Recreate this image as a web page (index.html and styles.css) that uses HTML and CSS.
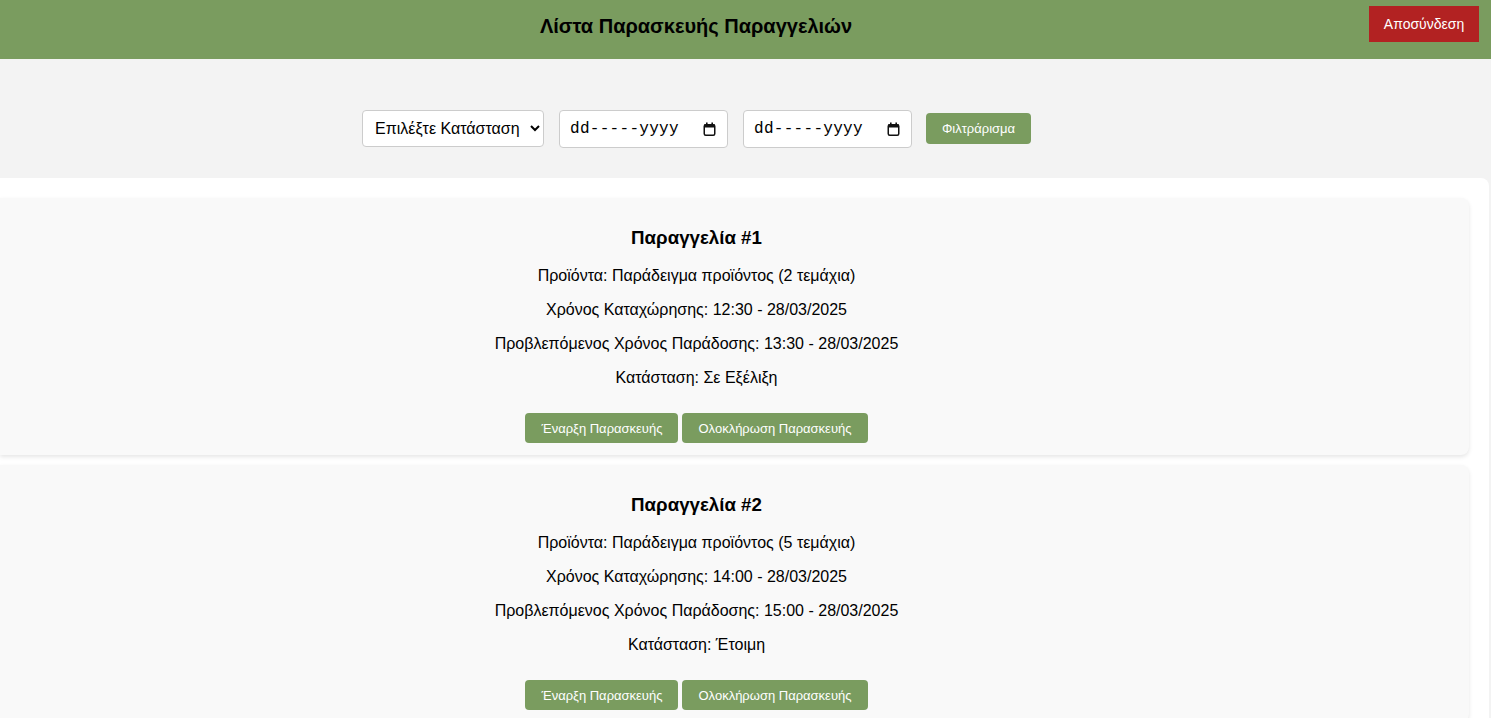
FILE: index.html
```html
<!DOCTYPE html>
<html lang="el">
<head>
<meta charset="utf-8">
<title>Λίστα Παρασκευής Παραγγελιών</title>
<link rel="stylesheet" href="styles.css">
</head>
<body>
<header class="topbar">
  <h1 class="topbar-title">Λίστα Παρασκευής Παραγγελιών</h1>
  <button class="logout-btn" type="button">Αποσύνδεση</button>
</header>

<section class="filters">
  <select class="status-select">
    <option>Επιλέξτε Κατάσταση</option>
    <option>Σε Εξέλιξη</option>
    <option>Έτοιμη</option>
  </select>
  <label class="date-field">
    <input class="date-text" type="text" value="dd-----yyyy" readonly>
    <svg class="cal-icon" width="13" height="14" viewBox="0 0 13 14" aria-hidden="true">
      <rect x="1.25" y="2.75" width="10.5" height="10.5" rx="1.5" fill="none" stroke="#111" stroke-width="1.5"/>
      <rect x="1" y="2.5" width="11" height="3" fill="#111"/>
      <rect x="3" y="0.5" width="1.6" height="2.5" fill="#111"/>
      <rect x="8.4" y="0.5" width="1.6" height="2.5" fill="#111"/>
    </svg>
  </label>
  <label class="date-field">
    <input class="date-text" type="text" value="dd-----yyyy" readonly>
    <svg class="cal-icon" width="13" height="14" viewBox="0 0 13 14" aria-hidden="true">
      <rect x="1.25" y="2.75" width="10.5" height="10.5" rx="1.5" fill="none" stroke="#111" stroke-width="1.5"/>
      <rect x="1" y="2.5" width="11" height="3" fill="#111"/>
      <rect x="3" y="0.5" width="1.6" height="2.5" fill="#111"/>
      <rect x="8.4" y="0.5" width="1.6" height="2.5" fill="#111"/>
    </svg>
  </label>
  <button class="green-btn filter-btn" type="button">Φιλτράρισμα</button>
</section>

<main class="orders">
  <article class="order-card">
    <h3 class="order-title">Παραγγελία #1</h3>
    <p class="order-line">Προϊόντα: Παράδειγμα προϊόντος (2 τεμάχια)</p>
    <p class="order-line">Χρόνος Καταχώρησης: 12:30 - 28/03/2025</p>
    <p class="order-line">Προβλεπόμενος Χρόνος Παράδοσης: 13:30 - 28/03/2025</p>
    <p class="order-line">Κατάσταση: Σε Εξέλιξη</p>
    <div class="order-actions">
      <button class="green-btn" type="button">Έναρξη Παρασκευής</button>
      <button class="green-btn" type="button">Ολοκλήρωση Παρασκευής</button>
    </div>
  </article>
  <article class="order-card">
    <h3 class="order-title">Παραγγελία #2</h3>
    <p class="order-line">Προϊόντα: Παράδειγμα προϊόντος (5 τεμάχια)</p>
    <p class="order-line">Χρόνος Καταχώρησης: 14:00 - 28/03/2025</p>
    <p class="order-line">Προβλεπόμενος Χρόνος Παράδοσης: 15:00 - 28/03/2025</p>
    <p class="order-line">Κατάσταση: Έτοιμη</p>
    <div class="order-actions">
      <button class="green-btn" type="button">Έναρξη Παρασκευής</button>
      <button class="green-btn" type="button">Ολοκλήρωση Παρασκευής</button>
    </div>
  </article>
</main>
</body>
</html>
```

FILE: styles.css
```css
* {
  box-sizing: border-box;
}

body {
  margin: 0;
  background: #f3f3f3;
  font-family: "Liberation Sans", Arial, sans-serif;
  color: #000;
}

.topbar {
  display: flex;
  align-items: flex-start;
  height: 59px;
  padding: 0 12px 0 23px;
  background: #7a9c5f;
}

.topbar-title {
  flex: 1;
  margin: 0;
  padding-top: 15px;
  font-size: 20px;
  line-height: 23px;
  font-weight: bold;
  text-align: center;
  color: #000;
}

.logout-btn {
  margin-top: 6px;
  height: 36px;
  width: 110px;
  padding: 0;
  border: none;
  background: #b22222;
  color: #fff;
  font-family: "Liberation Sans", Arial, sans-serif;
  font-size: 14px;
  cursor: pointer;
}

.filters {
  display: flex;
  justify-content: center;
  align-items: center;
  gap: 15px;
  height: 119px;
  padding: 50px 98px 31px 0;
}

.status-select {
  width: 182px;
  height: 37px;
  padding: 0 6px 0 8px;
  border: 1px solid #ccc;
  border-radius: 4px;
  background: #fff;
  color: #000;
  font-family: "Liberation Sans", Arial, sans-serif;
  font-size: 16px;
}

.date-field {
  display: flex;
  align-items: center;
  width: 169px;
  height: 38px;
  margin-top: 1px;
  padding: 0 11px 0 10px;
  border: 1px solid #ccc;
  border-radius: 4px;
  background: #fff;
}

.date-text {
  flex: 1;
  min-width: 0;
  padding: 0;
  border: none;
  outline: none;
  background: transparent;
  font-family: "Liberation Mono", "Courier New", monospace;
  font-size: 16px;
  letter-spacing: 0.3px;
  color: #000;
}

.cal-icon {
  flex: none;
  display: block;
}

.green-btn {
  height: 30px;
  padding: 0 16px;
  border: none;
  border-radius: 4px;
  background: #7a9c5f;
  color: #fff;
  font-family: "Liberation Sans", Arial, sans-serif;
  font-size: 13px;
  cursor: pointer;
}

.filter-btn {
  width: 105px;
  height: 31px;
  padding: 0;
  margin-left: -1px;
}

.orders {
  width: 1489px;
  padding: 20px 20px 1px 0;
  background: #fff;
  border-top-right-radius: 8px;
}

.order-card {
  margin-bottom: 10px;
  padding: 29px 76px 12px 0;
  background: #f9f9f9;
  border-radius: 0 8px 8px 0;
  box-shadow: 0 2px 4px rgba(0, 0, 0, 0.1);
  text-align: center;
}

.order-title {
  margin: 0 0 18px;
  font-size: 18.72px;
  line-height: 22px;
  font-weight: bold;
}

.order-line {
  margin: 16px 0;
  font-size: 16px;
}

.order-actions {
  display: flex;
  justify-content: center;
  gap: 4px;
  margin-top: 26px;
}
```
